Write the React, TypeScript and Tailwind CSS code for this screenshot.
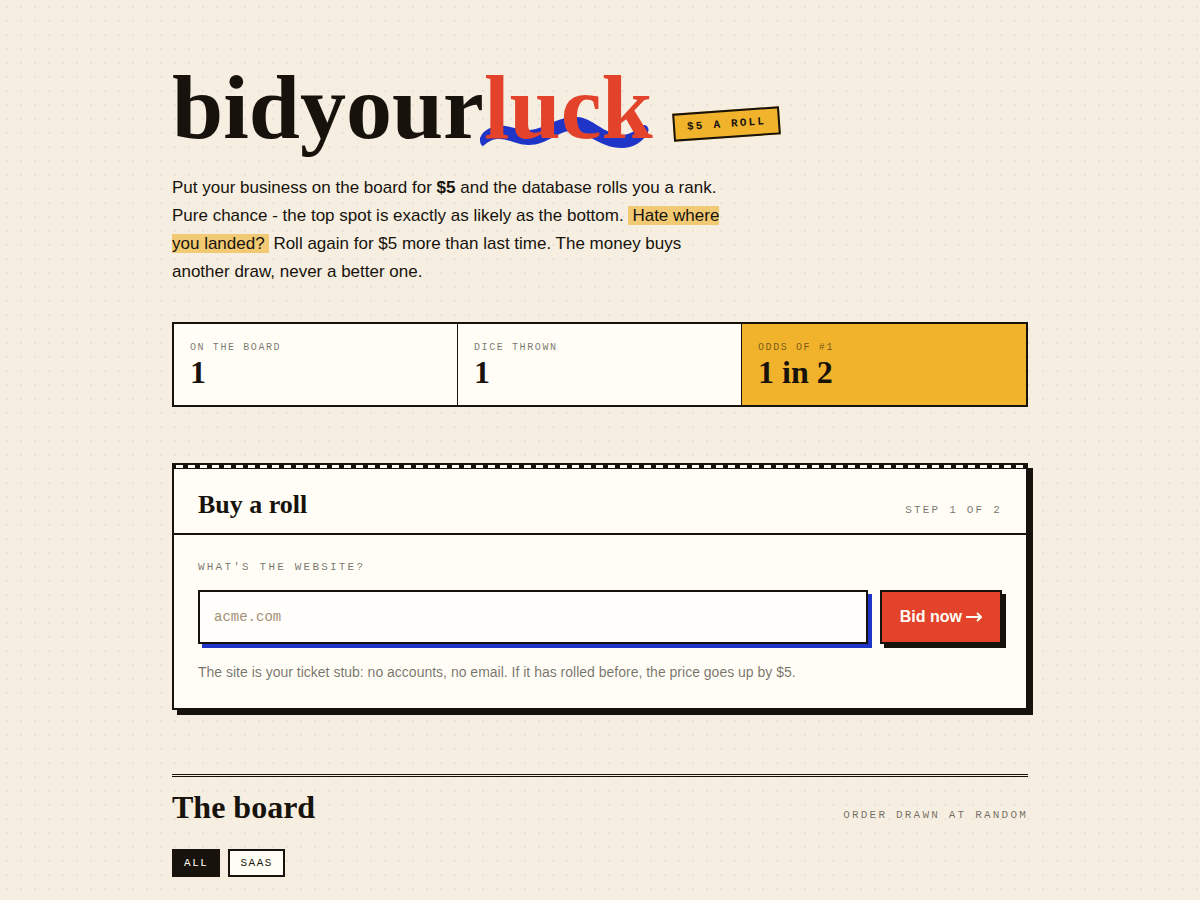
import { useState } from 'react';

const SERIF = "font-['Liberation_Serif',serif]";
const MONO = "font-['Liberation_Mono',monospace]";

const stats = [
    { label: 'On the board', value: '1' },
    { label: 'Dice thrown', value: '1' },
    { label: 'Odds of #1', value: '1 in 2', hot: true },
];

const categories = ['All', 'SaaS'];

function Squiggle() {
    return (
        <svg
            viewBox="0 0 170 34"
            preserveAspectRatio="none"
            aria-hidden="true"
            className="absolute -left-1 bottom-2 -z-10 h-[34px] w-full"
            fill="#1f35c7"
        >
            <path d="M0 22C4 12 16 9 26 10C38 12 46 16 56 13C70 9 82 0 98 1C114 2 124 18 143 19C154 19 161 10 165 9C169 9 171 13 169 17C164 26 154 32 143 32C120 32 108 15 92 15C78 15 68 29 49 29C36 29 28 22 17 23C9 24 6 28 3 30C0 29 0 25 0 22Z" />
        </svg>
    );
}

function Masthead() {
    return (
        <header>
            <div className="flex flex-wrap items-end gap-x-5">
                <h1 className={`${SERIF} isolate text-[92px] leading-[106px] font-bold`}>
                    bidyour
                    <span className="relative text-[#e2432a]">
                        luck
                        <Squiggle />
                    </span>
                </h1>
                <span
                    className={`${MONO} mb-[22px] -rotate-4 border-2 border-[#17130c] bg-[#f1b32c] px-3 py-1 text-[11px] leading-4 font-bold tracking-[0.2em] uppercase`}
                >
                    $5 a roll
                </span>
            </div>
            <p className="mt-[14px] max-w-[568px] text-[17px] leading-7">
                Put your business on the board for <strong>$5</strong> and the database rolls you a
                rank. Pure chance - the top spot is exactly as likely as the bottom.{' '}
                <mark className="bg-[#f1b32c]/60 px-1 font-medium text-inherit">
                    Hate where you landed?
                </mark>{' '}
                Roll again for $5 more than last time. The money buys another draw, never a better
                one.
            </p>
        </header>
    );
}

function Stats() {
    return (
        <dl className="mt-9 grid grid-cols-3 divide-x divide-[#17130c] border-2 border-[#17130c] bg-[#fffdf5]">
            {stats.map((stat) => (
                <div key={stat.label} className={`p-4 ${stat.hot ? 'bg-[#f1b32c]' : ''}`}>
                    <dt
                        className={`${MONO} text-[10px] leading-4 tracking-[0.16em] text-[#17130c]/60 uppercase`}
                    >
                        {stat.label}
                    </dt>
                    <dd className={`${SERIF} text-[32px] leading-[33px] font-bold`}>{stat.value}</dd>
                </div>
            ))}
        </dl>
    );
}

function BuyRoll() {
    const [site, setSite] = useState('');

    return (
        <section className="mt-14 border-2 border-[#17130c] bg-[#fffdf5] shadow-[5px_5px_0_#17130c]">
            <div className="h-1 border-b border-[#17130c] bg-[repeating-linear-gradient(90deg,#17130c_0_2px,#fffdf5_2px_9px,#17130c_9px_12px)]" />
            <div className="flex items-baseline justify-between border-b-2 border-[#17130c] px-6 pt-5 pb-3">
                <h2 className={`${SERIF} text-[26px] leading-8 font-bold`}>Buy a roll</h2>
                <span className={`${MONO} text-[11px] tracking-[0.2em] text-[#17130c]/60 uppercase`}>
                    Step 1 of 2
                </span>
            </div>
            <form className="p-6" onSubmit={(e) => e.preventDefault()}>
                <label
                    htmlFor="site"
                    className={`${MONO} block text-[11px] leading-4 tracking-[0.2em] text-[#17130c]/60 uppercase`}
                >
                    What's the website?
                </label>
                <div className="mt-[15px] flex gap-3">
                    <input
                        id="site"
                        type="text"
                        placeholder="acme.com"
                        value={site}
                        onChange={(e) => setSite(e.target.value)}
                        className={`${MONO} h-[54px] min-w-0 flex-1 border-2 border-[#17130c] bg-[#fffefa] px-[14px] text-sm shadow-[4px_4px_0_#1f35c7] outline-none placeholder:text-[#a39178]`}
                    />
                    <button
                        type="submit"
                        className="flex items-center gap-1 border-2 border-[#17130c] bg-[#e2432a] px-[18px] font-bold text-[#fffdf5] shadow-[4px_4px_0_#17130c]"
                    >
                        Bid now
                        <svg
                            viewBox="0 0 16 10"
                            aria-hidden="true"
                            className="h-[10px] w-4"
                            fill="none"
                            stroke="currentColor"
                            strokeWidth="2"
                        >
                            <path d="M0 5H15M11 1L15 5L11 9" />
                        </svg>
                    </button>
                </div>
                <p className="mt-4 text-sm leading-6 text-[#17130c]/60">
                    The site is your ticket stub: no accounts, no email. If it has rolled before,
                    the price goes up by $5.
                </p>
            </form>
        </section>
    );
}

function Board() {
    const [active, setActive] = useState('All');

    return (
        <section className="mt-16 border-t-3 border-double border-[#17130c] pt-3">
            <div className="flex items-baseline justify-between">
                <h2 className={`${SERIF} text-[32px] leading-9 font-bold`}>The board</h2>
                <span className={`${MONO} text-[11px] tracking-[0.2em] text-[#17130c]/60 uppercase`}>
                    Order drawn at random
                </span>
            </div>
            <div className="mt-6 flex gap-2">
                {categories.map((category) => (
                    <button
                        key={category}
                        type="button"
                        onClick={() => setActive(category)}
                        className={`${MONO} border-2 border-[#17130c] px-[10px] text-[11px] leading-6 tracking-[0.14em] uppercase ${
                            active === category ? 'bg-[#17130c] text-[#fffdf5]' : 'bg-[#fffdf5]'
                        }`}
                    >
                        {category}
                    </button>
                ))}
            </div>
        </section>
    );
}

export default function App() {
    return (
        <div className="min-h-screen bg-[#f6eee1] bg-[radial-gradient(circle_at_7px_7px,#ebe2d5_1px,transparent_1px)] bg-size-[14px_14px] font-['Liberation_Sans',sans-serif] text-[#17130c]">
            <main className="mx-auto max-w-[904px] px-6 pt-[54px] pb-6">
                <Masthead />
                <Stats />
                <BuyRoll />
                <Board />
            </main>
        </div>
    );
}
